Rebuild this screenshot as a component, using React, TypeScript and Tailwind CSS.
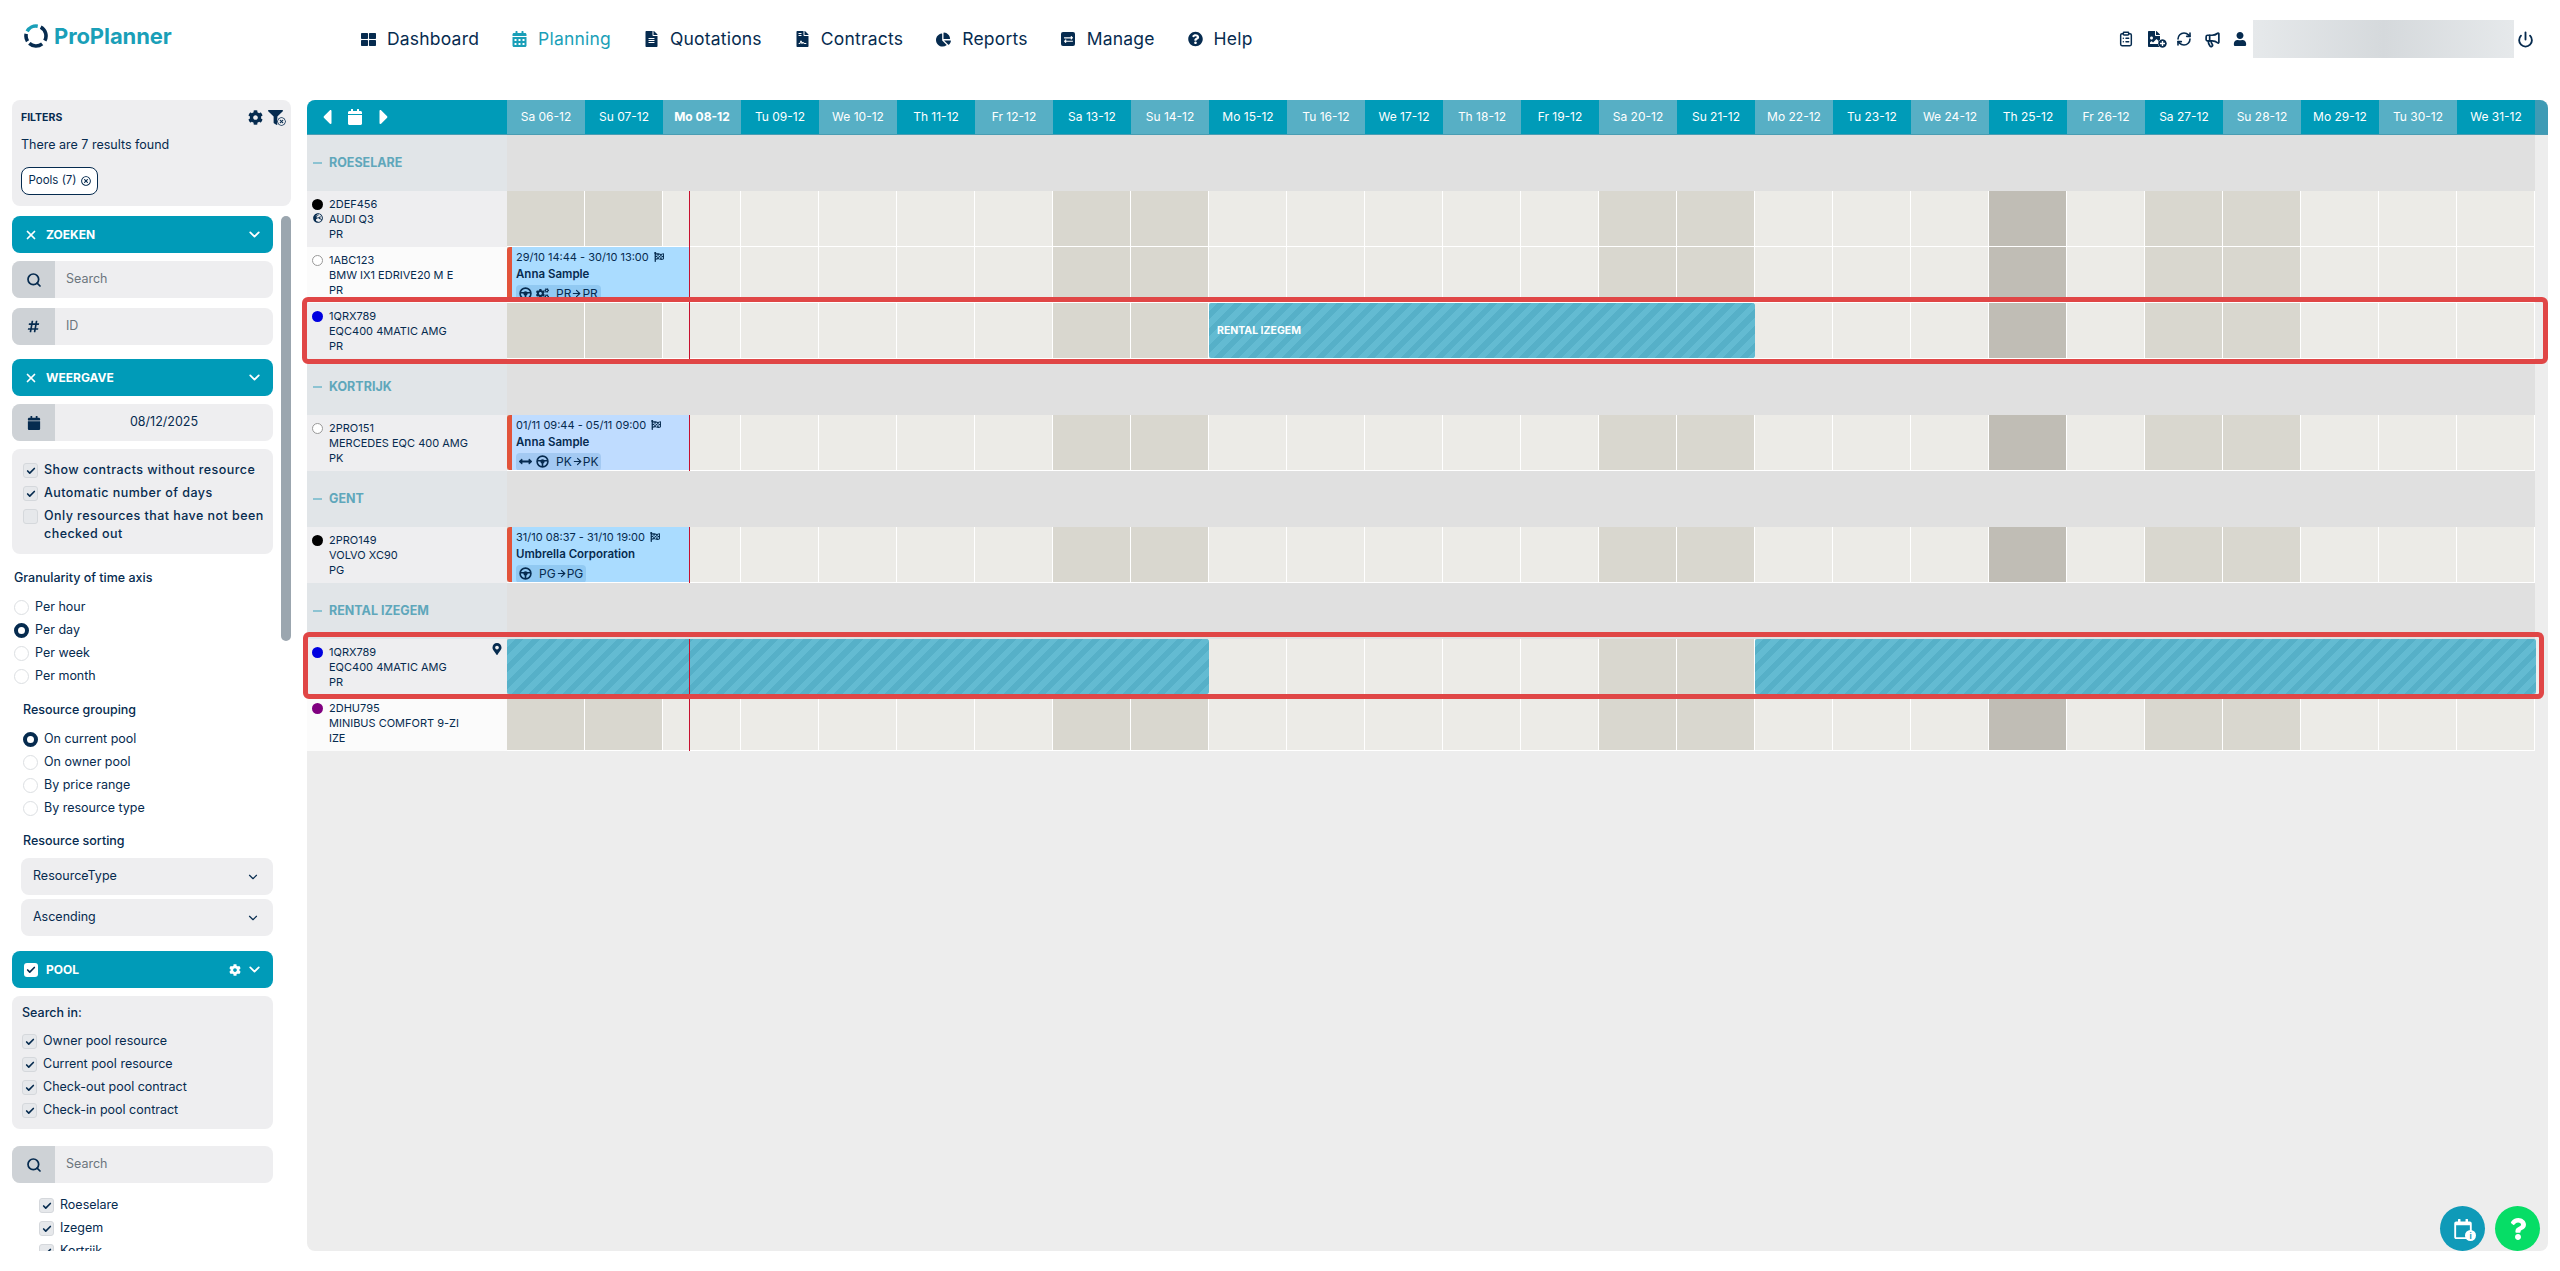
import { ReactNode } from 'react'
import { ArrowRight, Check, ChevronDown, ClipboardList, Megaphone, Power, RefreshCw, Search, X } from 'lucide-react'
import {
  FaArrowsAltH,
  FaCalendar,
  FaCalendarAlt,
  FaCaretLeft,
  FaCaretRight,
  FaChartPie,
  FaCog,
  FaCogs,
  FaExchangeAlt,
  FaFileAlt,
  FaFileContract,
  FaFileImage,
  FaFilter,
  FaFlagCheckered,
  FaGlobeEurope,
  FaHashtag,
  FaMapMarkerAlt,
  FaPlusCircle,
  FaQuestion,
  FaQuestionCircle,
  FaRegCalendar,
  FaRegTimesCircle,
  FaThLarge,
  FaUser,
} from 'react-icons/fa'

const days = [
  'Sa 06-12', 'Su 07-12', 'Mo 08-12', 'Tu 09-12', 'We 10-12', 'Th 11-12', 'Fr 12-12',
  'Sa 13-12', 'Su 14-12', 'Mo 15-12', 'Tu 16-12', 'We 17-12', 'Th 18-12', 'Fr 19-12',
  'Sa 20-12', 'Su 21-12', 'Mo 22-12', 'Tu 23-12', 'We 24-12', 'Th 25-12', 'Fr 26-12',
  'Sa 27-12', 'Su 28-12', 'Mo 29-12', 'Tu 30-12', 'We 31-12',
]
const weekend = [0, 1, 7, 8, 14, 15, 21, 22]

const nav = [
  { label: 'Dashboard', icon: <FaThLarge size={15} /> },
  { label: 'Planning', icon: <FaCalendarAlt size={16} />, active: true },
  { label: 'Quotations', icon: <FaFileAlt size={16} /> },
  { label: 'Contracts', icon: <FaFileContract size={16} /> },
  { label: 'Reports', icon: <FaChartPie size={17} /> },
  {
    label: 'Manage',
    icon: (
      <span className="flex h-[14px] w-[14px] items-center justify-center rounded-[2px] bg-[#062b4f] text-white">
        <FaExchangeAlt size={9} />
      </span>
    ),
  },
  { label: 'Help', icon: <FaQuestionCircle size={16} /> },
]

function Logo() {
  const arc = (from: number, to: number) => {
    const p = (a: number) => {
      const r = ((a - 90) * Math.PI) / 180
      return `${12 + 10 * Math.cos(r)} ${12 + 10 * Math.sin(r)}`
    }
    return `M${p(from)} A10 10 0 0 1 ${p(to)}`
  }
  return (
    <div className="flex w-[361px] shrink-0 items-center gap-[6px] pb-[6px] pl-[24px]">
      <svg width="24" height="24" viewBox="0 0 24 24" fill="none" strokeWidth="3.6">
        <path d={arc(-62, 10)} stroke="#1a9fb8" />
        <path d={arc(28, 118)} stroke="#062b4f" />
        <path d={arc(142, 222)} stroke="#062b4f" />
        <path d={arc(238, 282)} stroke="#062b4f" />
      </svg>
      <span className="text-[22px] font-bold tracking-[-0.1px] text-[#1a9fb8]">ProPlanner</span>
    </div>
  )
}

function Header() {
  return (
    <header className="flex h-[100px] shrink-0 items-center pb-[22px] text-[#062b4f]">
      <Logo />
      <nav className="flex gap-[33px]">
        {nav.map((n) => (
          <div key={n.label} className={`flex items-center gap-[11px] text-[17.5px] tracking-[0.2px] ${n.active ? 'text-[#1a9fb8]' : ''}`}>
            <span className="flex w-[15px] justify-center">{n.icon}</span>
            <span>{n.label}</span>
          </div>
        ))}
      </nav>
      <div className="ml-auto flex items-center pr-[26px]">
        <div className="flex w-[135px] items-center gap-[12px]">
          <ClipboardList size={16} strokeWidth={2.2} />
          <span className="relative">
            <FaFileImage size={16} />
            <FaPlusCircle size={9} className="absolute -bottom-[1px] -right-[5px] rounded-full bg-white" />
          </span>
          <RefreshCw size={16} strokeWidth={2.4} className="ml-[2px]" />
          <Megaphone size={17} strokeWidth={2.4} />
          <FaUser size={14} />
        </div>
        <div className="h-[38px] w-[261px] bg-gradient-to-r from-[#e6e9eb] via-[#d5d9dc] to-[#e6e9eb]" />
        <Power size={17} strokeWidth={2.6} className="ml-[3px]" />
      </div>
    </header>
  )
}

function Checkbox({ checked = true }: { checked?: boolean }) {
  return (
    <span className="flex h-[15px] w-[15px] shrink-0 items-center justify-center rounded-[3px] border border-[#d5d8dc] bg-[#e6e8eb]">
      {checked && <Check size={10} strokeWidth={4} className="text-[#062b4f]" />}
    </span>
  )
}

function Radio({ checked = false }: { checked?: boolean }) {
  return (
    <span
      className={`h-[15px] w-[15px] shrink-0 rounded-full bg-white ${
        checked ? 'border-[4px] border-[#062b4f]' : 'border border-[#dcdfe2]'
      }`}
    />
  )
}

function SectionBar({ icon, title, right }: { icon: ReactNode; title: string; right?: ReactNode }) {
  return (
    <div className="flex h-[37px] shrink-0 items-center rounded-lg bg-[#009bb8] pr-[10px] text-white">
      <span className="flex w-[26px] justify-end">{icon}</span>
      <span className="ml-[8px] text-[12px] font-bold">{title}</span>
      <span className="ml-auto flex items-center gap-[5px]">
        {right}
        <ChevronDown size={17} strokeWidth={2.5} />
      </span>
    </div>
  )
}

function InputRow({ icon, children }: { icon: ReactNode; children: ReactNode }) {
  return (
    <div className="flex h-[37px] shrink-0 overflow-hidden rounded-lg bg-[#eeeef0]">
      <span className="flex w-[43px] items-center justify-center bg-[#ced2d6] text-[#062b4f]">{icon}</span>
      {children}
    </div>
  )
}

function SelectRow({ label }: { label: string }) {
  return (
    <div className="ml-[9px] flex h-[37px] items-center justify-between rounded-lg bg-[#eeeef0] pl-[12px] pr-[13px] text-[12.5px]">
      {label}
      <ChevronDown size={14} />
    </div>
  )
}

function CheckLine({ label }: { label: string }) {
  return (
    <div className="flex h-[23px] items-center gap-[6px]">
      <Checkbox />
      <span>{label}</span>
    </div>
  )
}

function RadioLine({ label, checked }: { label: string; checked?: boolean }) {
  return (
    <div className="flex h-[23px] items-center gap-[6px]">
      <Radio checked={checked} />
      <span>{label}</span>
    </div>
  )
}

function Sidebar() {
  return (
    <aside className="ml-[12px] flex h-[1151px] w-[279px] shrink-0 flex-col text-[12.5px] text-[#062b4f]">
      <div className="h-[106px] shrink-0 rounded-lg bg-[#eeeef0] pl-[9px] pr-[8px] pt-[11px]">
        <div className="flex h-[13px] items-center justify-between">
          <span className="text-[10.5px] font-bold">FILTERS</span>
          <span className="flex items-center gap-[5px]">
            <FaCog size={15} />
            <span className="relative">
              <FaFilter size={15} />
              <FaRegTimesCircle size={9} className="absolute -bottom-[1px] -right-[3px] rounded-full bg-[#eeeef0]" />
            </span>
          </span>
        </div>
        <div className="mt-[12px] text-[12.5px]">There are 7 results found</div>
        <div className="mt-[12px] flex h-[28px] w-[77px] items-center justify-center gap-[4px] rounded-lg border border-[#062b4f] bg-white text-[11.5px]">
          Pools (7)
          <FaRegTimesCircle size={10} />
        </div>
      </div>

      <div className="mt-[10px] flex min-h-0 flex-1 gap-[8px] overflow-hidden">
        <div className="flex w-[261px] shrink-0 flex-col">
          <SectionBar icon={<X size={14} strokeWidth={3} />} title="ZOEKEN" />
          <div className="mt-[8px]">
            <InputRow icon={<Search size={16} strokeWidth={2.6} />}>
              <span className="flex items-center pl-[11px] text-[#6c757d]">Search</span>
            </InputRow>
          </div>
          <div className="mt-[10px]">
            <InputRow icon={<FaHashtag size={13} />}>
              <span className="flex items-center pl-[11px] text-[#6c757d]">ID</span>
            </InputRow>
          </div>
          <div className="mt-[14px]">
            <SectionBar icon={<X size={14} strokeWidth={3} />} title="WEERGAVE" />
          </div>
          <div className="mt-[8px]">
            <InputRow icon={<FaCalendar size={14} />}>
              <span className="flex flex-1 items-center justify-center">08/12/2025</span>
            </InputRow>
          </div>
          <div className="mt-[8px] h-[105px] shrink-0 rounded-lg bg-[#eeeef0] pl-[11px] pt-[10px] font-medium tracking-[0.45px]">
            <CheckLine label="Show contracts without resource" />
            <CheckLine label="Automatic number of days" />
            <div className="flex gap-[6px] pt-[4px] leading-[18px]">
              <Checkbox checked={false} />
              <span className="-mt-[2px]">
                Only resources that have not been
                <br />
                checked out
              </span>
            </div>
          </div>
          <div className="ml-[2px] mt-[15px] font-medium">Granularity of time axis</div>
          <div className="ml-[2px] mt-[8px]">
            <RadioLine label="Per hour" />
            <RadioLine label="Per day" checked />
            <RadioLine label="Per week" />
            <RadioLine label="Per month" />
          </div>
          <div className="ml-[11px] mt-[13px] font-medium">Resource grouping</div>
          <div className="ml-[11px] mt-[8px]">
            <RadioLine label="On current pool" checked />
            <RadioLine label="On owner pool" />
            <RadioLine label="By price range" />
            <RadioLine label="By resource type" />
          </div>
          <div className="ml-[11px] mt-[12px] font-medium">Resource sorting</div>
          <div className="mt-[8px] flex flex-col gap-[4px]">
            <SelectRow label="ResourceType" />
            <SelectRow label="Ascending" />
          </div>
          <div className="mt-[15px]">
            <SectionBar
              icon={
                <span className="flex h-[14px] w-[14px] items-center justify-center rounded-[3px] bg-white text-[#062b4f]">
                  <Check size={10} strokeWidth={4} />
                </span>
              }
              title="POOL"
              right={<FaCog size={12} />}
            />
          </div>
          <div className="mt-[8px] h-[133px] shrink-0 rounded-lg bg-[#eeeef0] pl-[10px] pt-[8px]">
            <div className="mb-[7px] font-medium">Search in:</div>
            <CheckLine label="Owner pool resource" />
            <CheckLine label="Current pool resource" />
            <CheckLine label="Check-out pool contract" />
            <CheckLine label="Check-in pool contract" />
          </div>
          <div className="mt-[17px]">
            <InputRow icon={<Search size={16} strokeWidth={2.6} />}>
              <span className="flex items-center pl-[11px] text-[#6c757d]">Search</span>
            </InputRow>
          </div>
          <div className="ml-[27px] mt-[11px] shrink-0">
            <CheckLine label="Roeselare" />
            <CheckLine label="Izegem" />
            <CheckLine label="Kortrijk" />
          </div>
        </div>
        <div className="h-[425px] w-[10px] shrink-0 rounded-full bg-[#9ba6af]" />
      </div>
    </aside>
  )
}

function SteeringWheel() {
  return (
    <svg width="13" height="13" viewBox="0 0 24 24" fill="none" stroke="#062b4f" strokeWidth="3">
      <circle cx="12" cy="12" r="10" />
      <path d="M2.5 10.5h19M12 14v7" />
      <circle cx="12" cy="12" r="2.5" fill="#062b4f" />
    </svg>
  )
}

function EventBar({ range, name, bg, icons, route }: { range: string; name: string; bg: string; icons: ReactNode; route: string[] }) {
  return (
    <div className={`absolute inset-y-0 bottom-[1px] left-0 w-[182px] overflow-hidden rounded-l-[3px] border-l-[5px] border-[#e2533a] pl-[4px] text-[#062b4f] ${bg}`}>
      <div className="flex h-[20px] items-center gap-[5px] text-[11px]">
        {range}
        <FaFlagCheckered size={10} />
      </div>
      <div className="flex h-[15px] items-center text-[11.5px] font-semibold">{name}</div>
      <div className="mt-[1px] inline-flex h-[18px] items-center gap-[4px] rounded-[4px] bg-[#0a5ea8]/15 px-[3px] text-[12px]">
        {icons}
        <span className="ml-[3px] flex items-center">
          {route[0]}
          <ArrowRight size={11} strokeWidth={2.5} />
          {route[1]}
        </span>
      </div>
    </div>
  )
}

function ResourceRow({ lines, dot, shade, children, badge, pin }: {
  lines: string[]
  dot: string
  shade?: boolean
  children?: ReactNode
  badge?: boolean
  pin?: boolean
}) {
  return (
    <div className="flex h-[56px]">
      <div className={`relative flex h-full w-[200px] shrink-0 flex-col justify-center pl-[22px] text-[11px] leading-[15px] text-[#062b4f] ${shade ? 'bg-[#eeeef0]' : 'bg-[#fbfbfb]'}`}>
        <span className={`absolute left-[5px] top-[8px] h-[11px] w-[11px] rounded-full ${dot}`} />
        {badge && <FaGlobeEurope size={10} className="absolute left-[6px] top-[22px]" />}
        {pin && <FaMapMarkerAlt size={12} className="absolute right-[4px] top-[4px]" />}
        {lines.map((l) => (
          <div key={l}>{l}</div>
        ))}
      </div>
      <div className="relative flex h-full">
        {days.map((d, i) => (
          <div
            key={d}
            className={`h-full w-[78px] shrink-0 border-b border-r border-white ${
              i === 19 ? 'bg-[#c0bdb5]' : weekend.includes(i) ? 'bg-[#d9d7cf]' : 'bg-[#ecebe7]'
            }`}
          />
        ))}
        {children}
        <div className="absolute inset-y-0 left-[182px] w-px bg-[#c8102e]" />
      </div>
    </div>
  )
}

function GroupRow({ title }: { title: string }) {
  return (
    <div className="flex h-[56px]">
      <div className="flex w-[200px] shrink-0 items-center gap-[7px] bg-[#e1e5e8] pl-[6px] text-[12.5px] font-bold text-[#5fa7bb]">
        <span className="h-[2px] w-[9px] bg-[#8cc3d2]" />
        {title}
      </div>
      <div className="w-[2028px] bg-[#e0e0e0]" />
    </div>
  )
}

function RentalBar({ left, width, label }: { left: string; width: string; label?: string }) {
  return (
    <div className={`absolute inset-y-0 bottom-[1px] ${left} ${width} flex items-center rounded-[2px] bg-[repeating-linear-gradient(135deg,#63bbd2_0,#63bbd2_6px,#56b0c8_6px,#56b0c8_12px)] pl-[8px] pt-[1px] text-[10.5px] font-bold text-white`}>
      {label}
    </div>
  )
}

function Planner() {
  return (
    <main className="relative ml-[16px] h-[1151px] w-[2241px] shrink-0 rounded-lg bg-[#ededed]">
      <div className="flex h-[35px] overflow-hidden rounded-t-lg border-b border-[#4a9db3] text-[12px] text-white">
        <div className="flex w-[200px] shrink-0 items-center gap-[8px] bg-[#009bb8] pl-[8px]">
          <FaCaretLeft size={24} />
          <FaCalendar size={16} />
          <FaCaretRight size={24} className="ml-[1px]" />
        </div>
        {days.map((d, i) => (
          <div
            key={d}
            className={`flex w-[78px] shrink-0 items-center justify-center ${i % 2 === 0 ? 'bg-[#57afc5]' : 'bg-[#009bb8]'} ${i === 2 ? 'font-bold' : ''}`}
          >
            {d}
          </div>
        ))}
        <div className="flex-1 bg-[#3f9bb5]" />
      </div>

      <GroupRow title="ROESELARE" />
      <ResourceRow shade dot="bg-black" badge lines={['2DEF456', 'AUDI Q3', 'PR']} />
      <ResourceRow dot="bg-white border border-[#999]" lines={['1ABC123', 'BMW IX1 EDRIVE20 M E', 'PR']}>
        <EventBar
          range="29/10 14:44 - 30/10 13:00"
          name="Anna Sample"
          bg="bg-[#aadcff]"
          route={['PR', 'PR']}
          icons={
            <>
              <SteeringWheel />
              <FaCogs size={13} />
            </>
          }
        />
      </ResourceRow>
      <ResourceRow shade dot="bg-[#0000e0]" lines={['1QRX789', 'EQC400 4MATIC AMG', 'PR']}>
        <RentalBar left="left-[702px]" width="w-[546px]" label="RENTAL IZEGEM" />
      </ResourceRow>
      <GroupRow title="KORTRIJK" />
      <ResourceRow shade dot="bg-white border border-[#999]" lines={['2PRO151', 'MERCEDES EQC 400 AMG', 'PK']}>
        <EventBar
          range="01/11 09:44 - 05/11 09:00"
          name="Anna Sample"
          bg="bg-[#bfdcff]"
          route={['PK', 'PK']}
          icons={
            <>
              <FaArrowsAltH size={13} />
              <SteeringWheel />
            </>
          }
        />
      </ResourceRow>
      <GroupRow title="GENT" />
      <ResourceRow shade dot="bg-black" lines={['2PRO149', 'VOLVO XC90', 'PG']}>
        <EventBar
          range="31/10 08:37 - 31/10 19:00"
          name="Umbrella Corporation"
          bg="bg-[#aadcff]"
          route={['PG', 'PG']}
          icons={<SteeringWheel />}
        />
      </ResourceRow>
      <GroupRow title="RENTAL IZEGEM" />
      <ResourceRow shade pin dot="bg-[#0000e0]" lines={['1QRX789', 'EQC400 4MATIC AMG', 'PR']}>
        <RentalBar left="left-0" width="w-[702px]" />
        <RentalBar left="left-[1248px]" width="w-[781px]" />
      </ResourceRow>
      <ResourceRow dot="bg-[#800080]" lines={['2DHU795', 'MINIBUS COMFORT 9-ZI', 'IZE']} />

      {/* highlight boxes drawn over the rows */}
      <div className="pointer-events-none absolute -left-[5px] top-[197px] h-[67px] w-[2246px] rounded-md border-[5px] border-[#e04646]" />
      <div className="pointer-events-none absolute -left-[4px] top-[532px] h-[67px] w-[2241px] rounded-md border-[5px] border-[#e04646]" />

      <div className="absolute bottom-0 right-[8px] flex gap-[10px]">
        <div className="relative flex h-[45px] w-[45px] items-center justify-center rounded-full bg-[#0f9ab8] text-white">
          <FaRegCalendar size={20} />
          <span className="absolute bottom-[10px] right-[9px] flex h-[11px] w-[11px] items-center justify-center rounded-full bg-white text-[8px] font-bold text-[#0f9ab8]">i</span>
        </div>
        <div className="flex h-[45px] w-[45px] items-center justify-center rounded-full bg-[#06dd66] text-white">
          <FaQuestion size={22} />
        </div>
      </div>
    </main>
  )
}

export default function App() {
  return (
    <div className="flex h-[1271px] w-[2560px] flex-col overflow-hidden bg-white font-['Inter',sans-serif]">
      <Header />
      <div className="flex">
        <Sidebar />
        <Planner />
      </div>
    </div>
  )
}
